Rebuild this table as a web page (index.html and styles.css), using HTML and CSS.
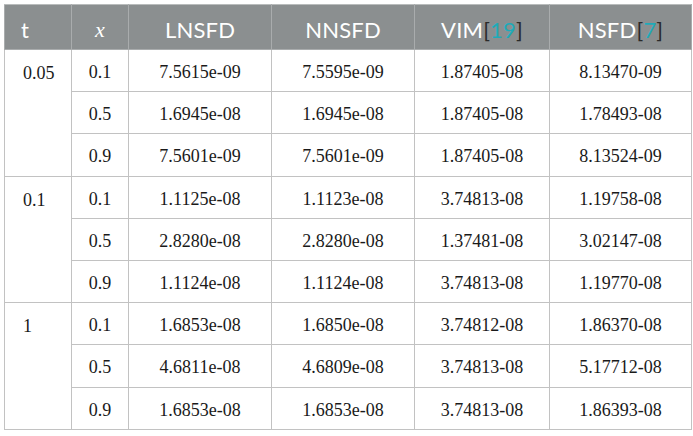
FILE: index.html
```html
<!DOCTYPE html>
<html>
<head>
<meta charset="utf-8">
<link rel="stylesheet" href="styles.css">
</head>
<body>
<table class="data">
  <colgroup>
    <col class="c-t"><col class="c-x"><col class="c-a"><col class="c-b"><col class="c-c"><col class="c-d">
  </colgroup>
  <thead>
    <tr>
      <th class="left">t</th>
      <th><span class="math">x</span></th>
      <th>LNSFD</th>
      <th>NNSFD</th>
      <th>VIM<span class="br">[</span><span class="ref">19</span><span class="br">]</span></th>
      <th>NSFD<span class="br">[</span><span class="ref">7</span><span class="br">]</span></th>
    </tr>
  </thead>
  <tbody>
    <tr><td rowspan="3" class="left top">0.05</td><td>0.1</td><td>7.5615e-09</td><td>7.5595e-09</td><td>1.87405-08</td><td>8.13470-09</td></tr>
    <tr><td>0.5</td><td>1.6945e-08</td><td>1.6945e-08</td><td>1.87405-08</td><td>1.78493-08</td></tr>
    <tr><td>0.9</td><td>7.5601e-09</td><td>7.5601e-09</td><td>1.87405-08</td><td>8.13524-09</td></tr>
    <tr><td rowspan="3" class="left top">0.1</td><td>0.1</td><td>1.1125e-08</td><td>1.1123e-08</td><td>3.74813-08</td><td>1.19758-08</td></tr>
    <tr><td>0.5</td><td>2.8280e-08</td><td>2.8280e-08</td><td>1.37481-08</td><td>3.02147-08</td></tr>
    <tr><td>0.9</td><td>1.1124e-08</td><td>1.1124e-08</td><td>3.74813-08</td><td>1.19770-08</td></tr>
    <tr><td rowspan="3" class="left top">1</td><td>0.1</td><td>1.6853e-08</td><td>1.6850e-08</td><td>3.74812-08</td><td>1.86370-08</td></tr>
    <tr><td>0.5</td><td>4.6811e-08</td><td>4.6809e-08</td><td>3.74813-08</td><td>5.17712-08</td></tr>
    <tr><td>0.9</td><td>1.6853e-08</td><td>1.6853e-08</td><td>3.74813-08</td><td>1.86393-08</td></tr>
  </tbody>
</table>
</body>
</html>
```

FILE: styles.css
```css
html, body {
  margin: 0;
  padding: 0;
  background: #ffffff;
}
body {
  padding: 4px 0 0 4px;
}
.data {
  border-collapse: collapse;
  table-layout: fixed;
  width: 687px;
  border: 1px solid #b9bcbc;
}
.c-t { width: 67px; }
.c-x { width: 57px; }
.c-a { width: 143px; }
.c-b { width: 143px; }
.c-c { width: 135px; }
.c-d { width: 142px; }

.data th {
  background: #8b8f90;
  color: #ffffff;
  font-family: Lato, "Open Sans", sans-serif;
  font-weight: 400;
  font-size: 22px;
  height: 40px;
  padding: 4px 0 0 0;
  text-align: center;
  border: 1px solid #a9acad;
  border-top-color: #b9bcbc;
  letter-spacing: 0.2px;
}
.data th.left {
  text-align: left;
  padding-left: 16px;
}
.math {
  font-family: "Liberation Serif", serif;
  font-style: italic;
  font-size: 22px;
}
.br { color: #2a2a2a; }
.ref { color: #1eaab8; }

.data td {
  font-family: "Liberation Serif", "Times New Roman", serif;
  font-size: 18px;
  color: #1a1a1a;
  height: 37.2px;
  padding: 4px 0 0 0;
  text-align: center;
  vertical-align: middle;
  border: 1px solid #c2c2c2;
}
.data td.left {
  text-align: left;
  padding-left: 18px;
}
.data td.top {
  vertical-align: top;
  padding-top: 13px;
}
```
